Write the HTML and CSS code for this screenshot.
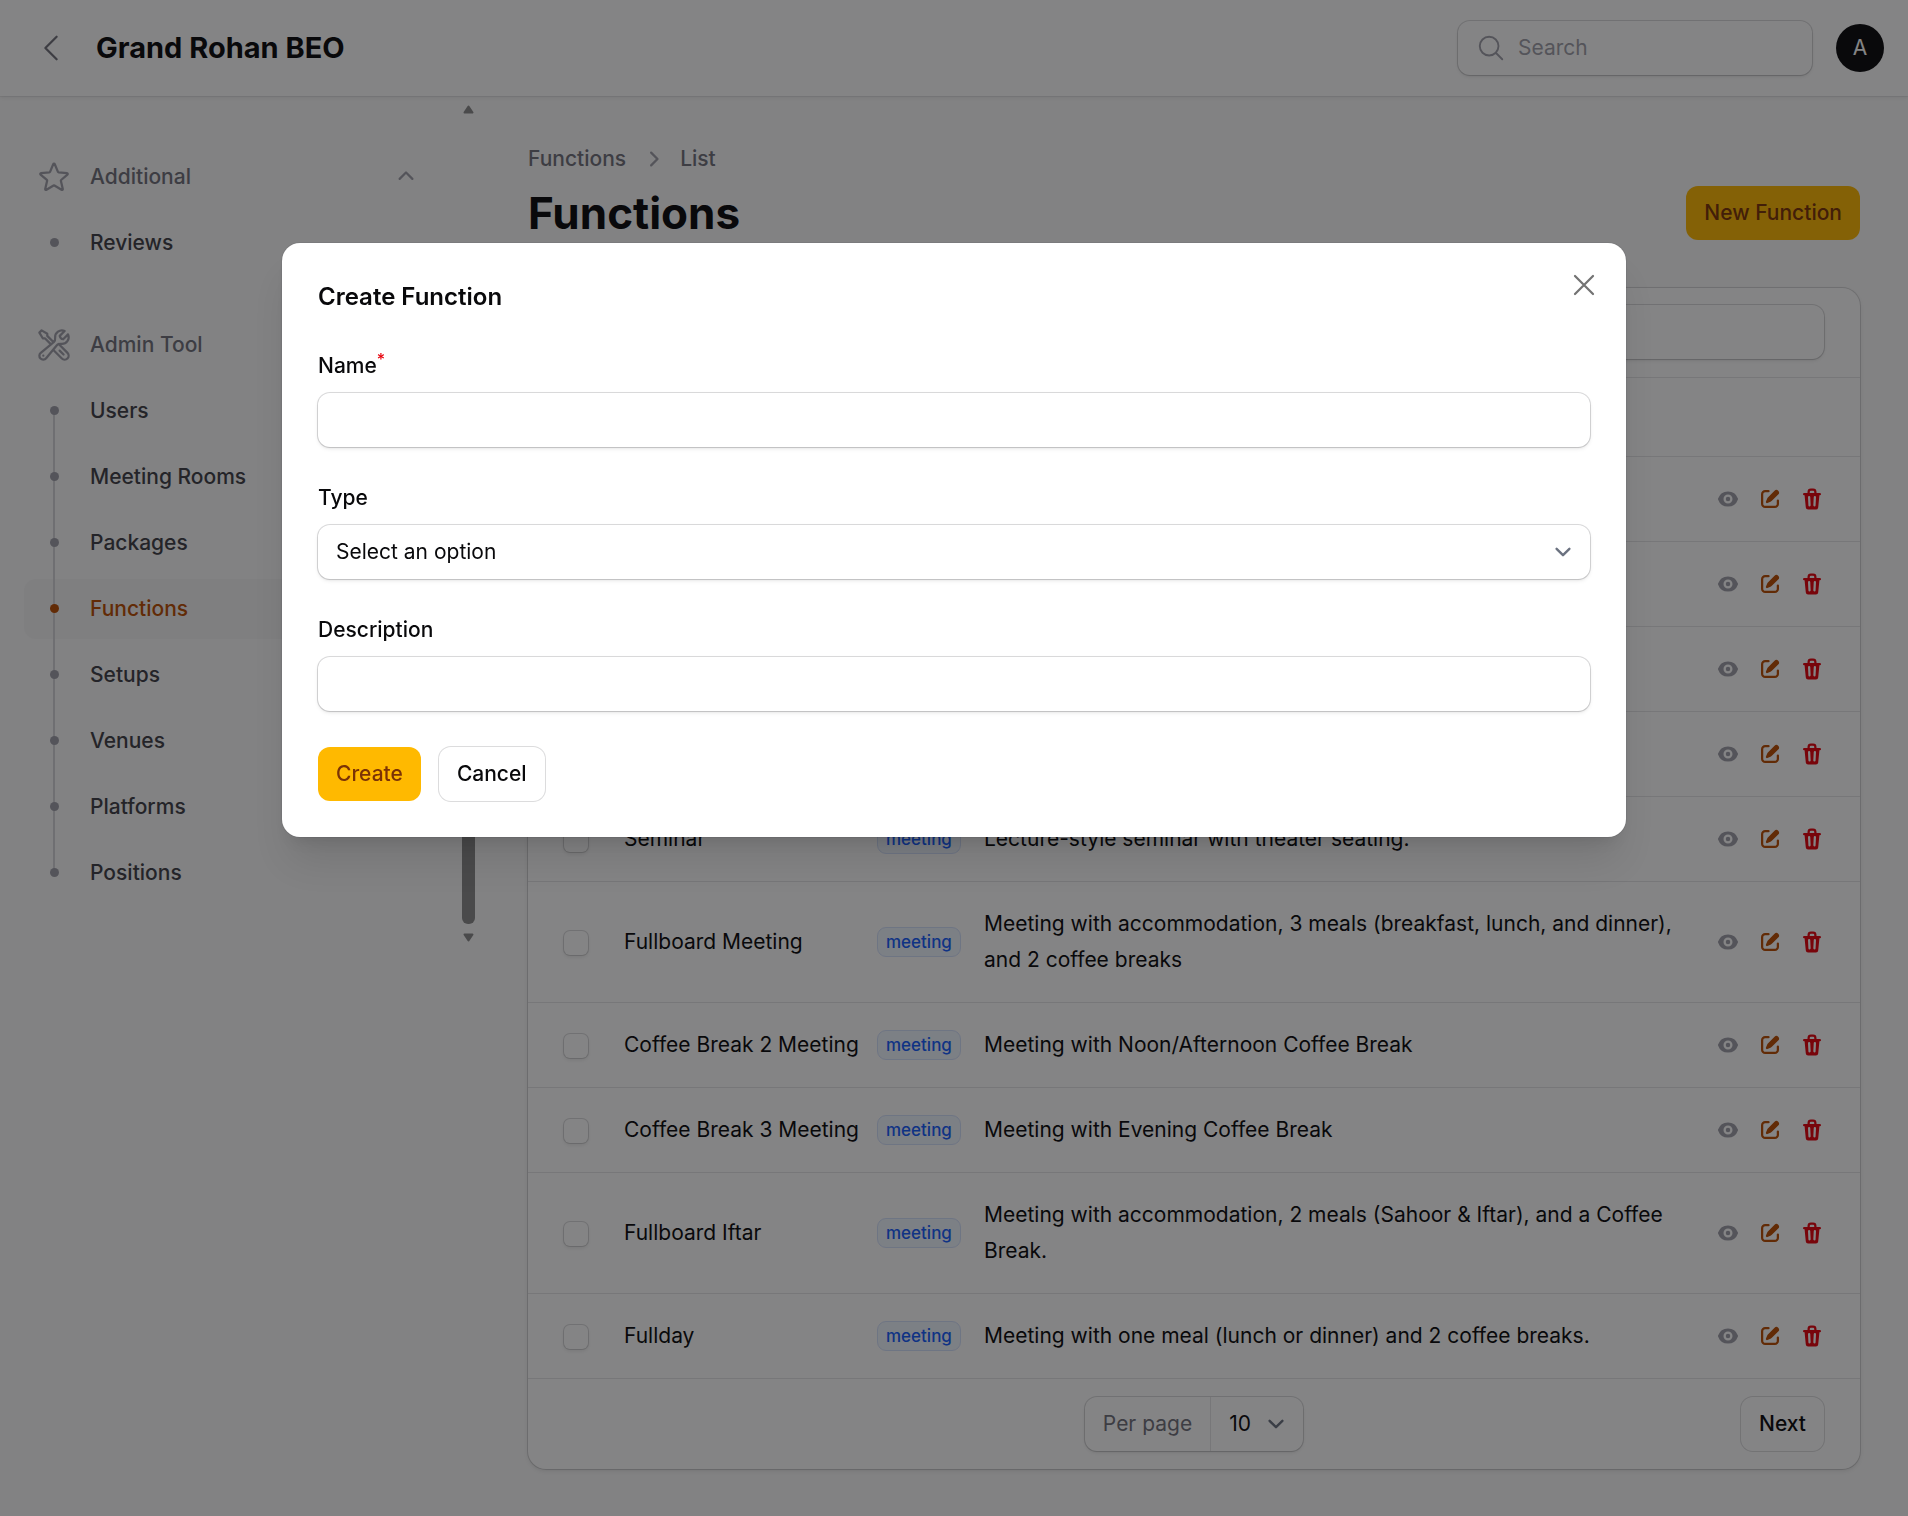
FILE: index.html
```html
<!DOCTYPE html>
<html lang="en">
<head>
    <meta charset="UTF-8">
    <meta name="viewport" content="width=device-width, initial-scale=1.0">
    <title>Functions - Grand Rohan BEO</title>
    <link rel="stylesheet" href="styles.css">
</head>
<body>
    <!-- Icons -->
    <svg class="sprite" aria-hidden="true">
        <symbol id="eye" viewBox="0 0 16 16"><path d="M8 9.5a1.5 1.5 0 1 0 0-3 1.5 1.5 0 0 0 0 3Z"/><path fill-rule="evenodd" d="M1.38 8.28a.87.87 0 0 1 0-.566 7.003 7.003 0 0 1 13.238.006.87.87 0 0 1 0 .566A7.003 7.003 0 0 1 1.379 8.28ZM11 8a3 3 0 1 1-6 0 3 3 0 0 1 6 0Z"/></symbol>
        <symbol id="edit" viewBox="0 0 16 16"><path d="M13.488 2.513a1.75 1.75 0 0 0-2.475 0L6.75 6.774a2.75 2.75 0 0 0-.596.892l-.848 2.047a.75.75 0 0 0 .98.98l2.047-.848a2.75 2.75 0 0 0 .892-.596l4.261-4.262a1.75 1.75 0 0 0 0-2.474Z"/><path d="M4.75 3.5c-.69 0-1.25.56-1.25 1.25v6.5c0 .69.56 1.25 1.25 1.25h6.5c.69 0 1.25-.56 1.25-1.25V9A.75.75 0 0 1 14 9v2.25A2.75 2.75 0 0 1 11.25 14h-6.5A2.75 2.75 0 0 1 2 11.25v-6.5A2.75 2.75 0 0 1 4.75 2H7a.75.75 0 0 1 0 1.5H4.75Z"/></symbol>
        <symbol id="trash" viewBox="0 0 16 16"><path fill-rule="evenodd" d="M5 3.25V4H2.75a.75.75 0 0 0 0 1.5h.3l.815 8.15A1.5 1.5 0 0 0 5.357 15h5.285a1.5 1.5 0 0 0 1.493-1.35l.815-8.15h.3a.75.75 0 0 0 0-1.5H11v-.75A2.25 2.25 0 0 0 8.75 1h-1.5A2.25 2.25 0 0 0 5 3.25Zm2.25-.75a.75.75 0 0 0-.75.75V4h3v-.75a.75.75 0 0 0-.75-.75h-1.5ZM6.05 6a.75.75 0 0 1 .787.713l.275 5.5a.75.75 0 0 1-1.498.075l-.275-5.5A.75.75 0 0 1 6.05 6Zm3.9 0a.75.75 0 0 1 .712.787l-.275 5.5a.75.75 0 0 1-1.498-.075l.275-5.5a.75.75 0 0 1 .786-.711Z"/></symbol>
        <symbol id="chevron-down" viewBox="0 0 20 20"><path fill="none" stroke="currentColor" stroke-width="1.5" stroke-linecap="round" stroke-linejoin="round" d="m6 8 4 4 4-4"/></symbol>
    </svg>

    <header class="topbar">
        <button type="button" class="back-btn" aria-label="Collapse sidebar">
            <svg class="icon-lg stroke" viewBox="0 0 24 24"><path d="M15.75 19.5 8.25 12l7.5-7.5"/></svg>
        </button>
        <a href="#" class="brand">Grand Rohan BEO</a>
        <div class="topbar-end">
            <label class="global-search">
                <svg class="icon stroke" viewBox="0 0 24 24"><path d="m21 21-5.197-5.197m0 0A7.5 7.5 0 1 0 5.196 5.196a7.5 7.5 0 0 0 10.607 10.607Z"/></svg>
                <input type="search" placeholder="Search" aria-label="Search">
            </label>
            <button type="button" class="avatar">A</button>
        </div>
    </header>

    <div class="layout">
        <aside class="sidebar">
            <nav class="sidebar-nav">
                <section>
                    <button type="button" class="group-header">
                        <svg class="icon-lg stroke" viewBox="0 0 24 24"><path d="M11.48 3.499a.562.562 0 0 1 1.04 0l2.125 5.111a.563.563 0 0 0 .475.345l5.518.442c.499.04.701.663.321.988l-4.204 3.602a.563.563 0 0 0-.182.557l1.285 5.385a.562.562 0 0 1-.84.61l-4.725-2.885a.562.562 0 0 0-.586 0L6.982 20.54a.562.562 0 0 1-.84-.61l1.285-5.386a.562.562 0 0 0-.182-.557l-4.204-3.602a.562.562 0 0 1 .321-.988l5.518-.442a.563.563 0 0 0 .475-.345L11.48 3.5Z"/></svg>
                        <span>Additional</span>
                        <svg class="icon" viewBox="0 0 20 20"><path d="M9.47 6.47a.75.75 0 0 1 1.06 0l4.25 4.25a.75.75 0 1 1-1.06 1.06L10 8.06l-3.72 3.72a.75.75 0 0 1-1.06-1.06l4.25-4.25Z"/></svg>
                    </button>
                    <ul>
                        <li><a href="#"><i class="dot"></i>Reviews</a></li>
                    </ul>
                </section>
                <section>
                    <button type="button" class="group-header">
                        <svg class="icon-lg stroke" viewBox="0 0 24 24"><path d="M11.42 15.17 17.25 21A2.652 2.652 0 0 0 21 17.25l-5.877-5.877M11.42 15.17l2.496-3.03c.317-.384.74-.626 1.208-.766M11.42 15.17l-4.655 5.653a2.548 2.548 0 1 1-3.586-3.586l6.837-5.63m5.108-.233c.55-.164 1.163-.188 1.743-.14a4.5 4.5 0 0 0 4.486-6.336l-3.276 3.277a3.004 3.004 0 0 1-2.25-2.25l3.276-3.276a4.5 4.5 0 0 0-6.336 4.486c.091 1.076-.071 2.264-.904 2.95l-.102.085m-1.745 1.437L5.909 7.5H4.5L2.25 3.75l1.5-1.5L7.5 4.5v1.409l4.26 4.26m-1.745 1.437 1.745-1.437m6.615 8.206L15.75 15.75M4.867 19.125h.008v.008h-.008v-.008Z"/></svg>
                        <span>Admin Tool</span>
                    </button>
                    <ul>
                        <li><a href="#"><i class="dot"></i>Users</a></li>
                        <li><a href="#"><i class="dot"></i>Meeting Rooms</a></li>
                        <li><a href="#"><i class="dot"></i>Packages</a></li>
                        <li class="active"><a href="#"><i class="dot"></i>Functions</a></li>
                        <li><a href="#"><i class="dot"></i>Setups</a></li>
                        <li><a href="#"><i class="dot"></i>Venues</a></li>
                        <li><a href="#"><i class="dot"></i>Platforms</a></li>
                        <li><a href="#"><i class="dot"></i>Positions</a></li>
                    </ul>
                </section>
            </nav>
            <div class="scrollbar" aria-hidden="true">
                <svg class="scroll-arrow" viewBox="0 0 11 9"><path d="M5.5 1.5 9.5 7.5h-8Z"/></svg>
                <div class="scroll-thumb"></div>
                <svg class="scroll-arrow" viewBox="0 0 11 9"><path d="M5.5 7.5 9.5 1.5h-8Z"/></svg>
            </div>
        </aside>

        <main class="content">
            <nav class="breadcrumbs">
                <a href="#">Functions</a>
                <svg class="icon" viewBox="0 0 20 20"><path d="M8.22 5.22a.75.75 0 0 1 1.06 0l4.25 4.25a.75.75 0 0 1 0 1.06l-4.25 4.25a.75.75 0 0 1-1.06-1.06L11.94 10 8.22 6.28a.75.75 0 0 1 0-1.06Z"/></svg>
                <a href="#">List</a>
            </nav>
            <div class="page-header">
                <h1>Functions</h1>
                <button type="button" class="btn btn-primary">New Function</button>
            </div>

            <div class="card">
                <div class="toolbar">
                    <input type="search" class="field" aria-label="Search functions">
                </div>
                <table>
                    <colgroup>
                        <col class="col-check">
                        <col class="col-name">
                        <col class="col-type">
                        <col>
                        <col class="col-actions">
                    </colgroup>
                    <thead>
                        <tr><th></th><th></th><th></th><th></th><th></th></tr>
                    </thead>
                    <tbody id="rows"></tbody>
                </table>
                <div class="pagination">
                    <div class="per-page">
                        <label for="per-page">Per page</label>
                        <div class="select">
                            <select id="per-page"><option>10</option></select>
                            <svg><use href="#chevron-down"/></svg>
                        </div>
                    </div>
                    <button type="button" class="btn btn-outline next">Next</button>
                </div>
            </div>
        </main>
    </div>

    <div class="overlay">
        <form class="modal" role="dialog" aria-labelledby="modal-title">
            <div class="modal-header">
                <h2 id="modal-title">Create Function</h2>
                <button type="button" class="close-btn" aria-label="Close">
                    <svg class="icon-lg stroke" viewBox="0 0 24 24"><path d="M6 18 18 6M6 6l12 12"/></svg>
                </button>
            </div>
            <div class="form-group">
                <label for="name">Name<sup>*</sup></label>
                <input type="text" id="name" name="name" class="field" required>
            </div>
            <div class="form-group">
                <label for="type">Type</label>
                <div class="select field">
                    <select id="type" name="type"><option>Select an option</option></select>
                    <svg><use href="#chevron-down"/></svg>
                </div>
            </div>
            <div class="form-group">
                <label for="description">Description</label>
                <input type="text" id="description" name="description" class="field">
            </div>
            <div class="modal-footer">
                <button type="submit" class="btn btn-primary">Create</button>
                <button type="button" class="btn btn-outline">Cancel</button>
            </div>
        </form>
    </div>

    <script>
        const functions = [
            {}, {}, {}, {},
            { name: 'Seminar', type: 'meeting', description: 'Lecture-style seminar with theater seating.' },
            { name: 'Fullboard Meeting', type: 'meeting', description: 'Meeting with accommodation, 3 meals (breakfast, lunch, and dinner), and 2 coffee breaks' },
            { name: 'Coffee Break 2 Meeting', type: 'meeting', description: 'Meeting with Noon/Afternoon Coffee Break' },
            { name: 'Coffee Break 3 Meeting', type: 'meeting', description: 'Meeting with Evening Coffee Break' },
            { name: 'Fullboard Iftar', type: 'meeting', description: 'Meeting with accommodation, 2 meals (Sahoor &amp; Iftar), and a Coffee Break.' },
            { name: 'Fullday', type: 'meeting', description: 'Meeting with one meal (lunch or dinner) and 2 coffee breaks.' }
        ];

        // Fill the table
        document.getElementById('rows').innerHTML = functions.map(item => `
            <tr>
                <td class="check"><input type="checkbox" aria-label="Select row"></td>
                <td class="name">${item.name || ''}</td>
                <td>${item.type ? `<span class="badge">${item.type}</span>` : ''}</td>
                <td>${item.description || ''}</td>
                <td>
                    <div class="actions">
                        <button type="button" class="view" aria-label="View"><svg><use href="#eye"/></svg></button>
                        <button type="button" class="edit" aria-label="Edit"><svg><use href="#edit"/></svg></button>
                        <button type="button" class="delete" aria-label="Delete"><svg><use href="#trash"/></svg></button>
                    </div>
                </td>
            </tr>
        `).join('');
    </script>
</body>
</html>
```
FILE: styles.css
```css
* {
    margin: 0;
    padding: 0;
    box-sizing: border-box;
}

:root {
    --ring: rgba(9, 9, 11, 0.14);
    --gray-400: #9f9fa9;
    --gray-500: #71717b;
    --gray-950: #09090b;
    --primary: #ffb900;
    --primary-dark: #bb4d00;
}

body {
    font-family: 'Inter', sans-serif;
    font-size: 21px;
    line-height: 30px;
    background: #fafafa;
    color: var(--gray-950);
    min-height: 100vh;
}

button, input, select {
    font: inherit;
    color: inherit;
    border: none;
    background: none;
}

button {
    cursor: pointer;
}

a {
    color: inherit;
    text-decoration: none;
}

ul {
    list-style: none;
}

svg {
    display: block;
    fill: currentColor;
    flex-shrink: 0;
}

.sprite {
    display: none;
}

.icon {
    width: 30px;
    height: 30px;
}

.icon-lg {
    width: 36px;
    height: 36px;
}

.stroke {
    fill: none;
    stroke: currentColor;
    stroke-width: 1.5;
    stroke-linecap: round;
    stroke-linejoin: round;
}

/* Top bar */
.topbar {
    display: flex;
    align-items: center;
    height: 96px;
    padding: 0 24px 0 33px;
    background: white;
    box-shadow: 0 0 0 1px rgba(9, 9, 11, 0.05), 0 1px 4px rgba(0, 0, 0, 0.1);
}

.back-btn {
    color: var(--gray-500);
    margin-right: 27px;
}

.brand {
    font-size: 29px;
    font-weight: 700;
    line-height: 36px;
}

.topbar-end {
    display: flex;
    align-items: center;
    gap: 24px;
    margin-left: auto;
}

.global-search, .field, .per-page {
    background: white;
    border-radius: 12px;
    box-shadow: 0 0 0 1px var(--ring), 0 2px 4px rgba(0, 0, 0, 0.08), 0 1px 2px rgba(0, 0, 0, 0.08);
}

.global-search {
    display: flex;
    align-items: center;
    gap: 12px;
    width: 354px;
    height: 54px;
    padding: 0 18px;
    color: var(--gray-400);
}

.global-search input {
    flex: 1;
    min-width: 0;
}

.global-search input::placeholder {
    color: var(--gray-400);
}

.avatar {
    width: 48px;
    height: 48px;
    border-radius: 50%;
    background: var(--gray-950);
    color: white;
}

.layout {
    display: flex;
    align-items: flex-start;
}

/* Sidebar */
.sidebar {
    display: flex;
    width: 480px;
    flex-shrink: 0;
}

.sidebar-nav {
    flex: 1;
    display: flex;
    flex-direction: column;
    gap: 42px;
    padding: 51px 28px 48px 24px;
    font-weight: 500;
}

.group-header {
    display: flex;
    align-items: center;
    gap: 18px;
    width: 100%;
    height: 60px;
    padding: 0 12px;
    margin-bottom: 6px;
    color: var(--gray-500);
    font-weight: 500;
    text-align: left;
}

.group-header span {
    flex: 1;
}

.group-header svg {
    color: var(--gray-400);
}

.sidebar-nav ul {
    display: flex;
    flex-direction: column;
    gap: 6px;
}

.sidebar-nav li {
    position: relative;
    color: #3f3f46;
}

.sidebar-nav a {
    display: flex;
    align-items: center;
    gap: 18px;
    height: 60px;
    padding: 0 12px;
    border-radius: 12px;
}

/* Line that joins the dots */
.sidebar-nav li::before {
    content: '';
    position: absolute;
    left: 29px;
    top: -3px;
    bottom: -3px;
    width: 2px;
    background: #d4d4d8;
}

.sidebar-nav li:first-child::before {
    top: 50%;
}

.sidebar-nav li:last-child::before {
    bottom: 50%;
}

.sidebar-nav li:only-child::before {
    display: none;
}

.dot {
    position: relative;
    width: 9px;
    height: 9px;
    margin: 0 13px 1px 14px;
    border-radius: 50%;
    background: var(--gray-400);
}

.sidebar-nav .active {
    color: var(--primary-dark);
}

.active a {
    background: #f4f4f5;
}

.active .dot {
    background: var(--primary-dark);
}

.scrollbar {
    display: flex;
    flex-direction: column;
    align-items: center;
    width: 19px;
    padding: 9px 5px 9px 1px;
    color: #8b8b8b;
}

.scroll-arrow {
    width: 11px;
    height: 9px;
    stroke: currentColor;
    stroke-width: 2;
    stroke-linejoin: round;
}

.scroll-thumb {
    width: 13px;
    height: 480px;
    margin: auto 0 9px;
    border-radius: 6px;
    background: #8b8b8b;
}

/* Page */
.content {
    flex: 1;
    min-width: 0;
    padding: 48px;
}

.breadcrumbs {
    display: flex;
    align-items: center;
    gap: 12px;
    color: var(--gray-500);
    font-weight: 500;
}

.breadcrumbs svg {
    color: var(--gray-400);
}

.page-header {
    display: flex;
    align-items: center;
    justify-content: space-between;
    margin: 12px 0 48px;
}

h1 {
    font-size: 44px;
    line-height: 54px;
    font-weight: 700;
}

.btn {
    height: 54px;
    padding: 0 18px;
    border-radius: 12px;
    font-weight: 500;
}

.btn-primary {
    background: var(--primary);
    color: #7b3306;
}

.btn-outline {
    background: white;
    box-shadow: 0 0 0 1px var(--ring);
}

.card {
    background: white;
    border-radius: 18px;
    box-shadow: 0 0 0 1px var(--ring), 0 2px 4px rgba(0, 0, 0, 0.1);
}

.toolbar {
    display: flex;
    justify-content: flex-end;
    padding: 17px 36px 18px;
    border-bottom: 1px solid #e4e4e7;
}

.toolbar .field {
    width: 354px;
}

.field {
    display: block;
    width: 100%;
    height: 54px;
    padding: 0 18px;
}

table {
    width: 100%;
    table-layout: fixed;
    border-collapse: collapse;
}

.col-check {
    width: 78px;
}

.col-name {
    width: 253px;
}

.col-type {
    width: 107px;
}

.col-actions {
    width: 162px;
}

tr {
    border-bottom: 1px solid #e4e4e7;
}

th {
    height: 78px;
}

td {
    height: 85px;
    padding: 24px 18px;
    line-height: 36px;
}

.check {
    padding: 2px 18px 0 36px;
}

.name {
    padding-right: 0;
    white-space: nowrap;
}

input[type="checkbox"] {
    appearance: none;
    display: block;
    width: 24px;
    height: 24px;
    border-radius: 6px;
    background: white;
    box-shadow: 0 0 0 1px var(--ring), 0 2px 4px rgba(0, 0, 0, 0.1);
}

.badge {
    display: block;
    width: max-content;
    padding: 0 8px;
    border: 1px solid #d3e0fb;
    border-radius: 9px;
    background: #eff6ff;
    color: #155dfc;
    font-size: 17px;
    line-height: 28px;
    font-weight: 500;
}

.actions {
    display: flex;
    justify-content: flex-end;
    gap: 18px;
    margin-right: 18px;
}

.actions svg {
    width: 24px;
    height: 24px;
}

.view {
    color: var(--gray-400);
}

.edit {
    color: var(--primary-dark);
}

.delete {
    color: #e7000b;
}

.pagination {
    display: grid;
    grid-template-columns: 1fr auto 1fr;
    align-items: center;
    padding: 18px 36px;
}

.per-page {
    grid-column: 2;
    display: flex;
    align-items: center;
    height: 54px;
}

.per-page label {
    padding: 0 18px;
    color: var(--gray-500);
}

.per-page .select {
    width: 93px;
    height: 54px;
    border-left: 1px solid #e4e4e7;
}

.next {
    justify-self: end;
}

/* Select with its own arrow */
.select {
    display: grid;
    align-items: center;
    padding: 0;
}

.select select, .select svg {
    grid-area: 1 / 1;
}

.select select {
    appearance: none;
    width: 100%;
    height: 54px;
    padding: 0 48px 0 18px;
}

.select svg {
    width: 32px;
    height: 32px;
    margin-right: 11px;
    justify-self: end;
    color: #6b7280;
    pointer-events: none;
}

/* Modal */
.overlay {
    position: fixed;
    inset: 0;
    display: flex;
    justify-content: center;
    align-items: flex-start;
    padding: 243px 24px 24px;
    background: rgba(9, 9, 11, 0.5);
}

.modal {
    display: flex;
    flex-direction: column;
    gap: 36px;
    width: 100%;
    max-width: 1344px;
    padding: 36px;
    background: white;
    border-radius: 18px;
    box-shadow: 0 0 0 1px rgba(9, 9, 11, 0.05), 0 30px 38px -8px rgba(0, 0, 0, 0.1), 0 12px 15px -9px rgba(0, 0, 0, 0.1);
}

.modal-header {
    display: flex;
    justify-content: space-between;
    height: 36px;
}

h2 {
    font-size: 24px;
    line-height: 36px;
    font-weight: 600;
}

.close-btn {
    height: 36px;
    margin: -12px -12px 0 0;
    color: #737373;
}

.form-group {
    display: flex;
    flex-direction: column;
    gap: 12px;
}

.form-group label {
    height: 30px;
    font-weight: 500;
}

sup {
    font-size: 16px;
    line-height: 0;
    color: #e7000b;
}

.modal-footer {
    display: flex;
    gap: 18px;
}
```
